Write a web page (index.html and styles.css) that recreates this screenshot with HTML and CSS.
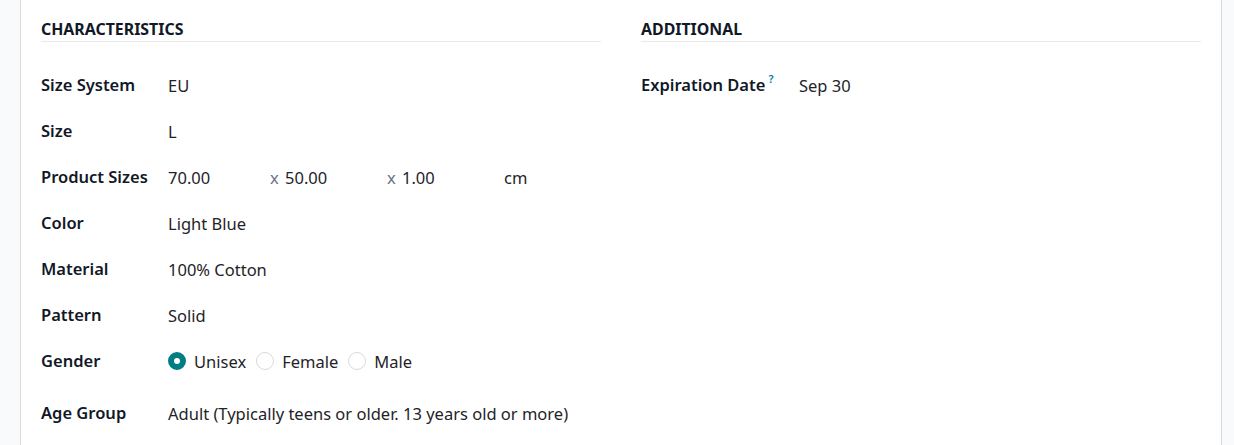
FILE: index.html
```html
<!DOCTYPE html>
<html lang="en">
<head>
  <meta charset="UTF-8" />
  <title>Product</title>
  <link rel="stylesheet" href="styles.css">
</head>
<body>
  <div class="sheet">
    <div class="group">
      <h2 class="group-title">Characteristics</h2>
      <div class="row">
        <div class="label">Size System</div>
        <div class="value">EU</div>
      </div>
      <div class="row">
        <div class="label">Size</div>
        <div class="value">L</div>
      </div>
      <div class="row">
        <div class="label">Product Sizes</div>
        <div class="value sizes">
          <span class="dim">70.00</span>
          <span class="times">x</span>
          <span class="dim">50.00</span>
          <span class="times">x</span>
          <span class="dim">1.00</span>
          <span class="unit">cm</span>
        </div>
      </div>
      <div class="row">
        <div class="label">Color</div>
        <div class="value">Light Blue</div>
      </div>
      <div class="row">
        <div class="label">Material</div>
        <div class="value">100% Cotton</div>
      </div>
      <div class="row">
        <div class="label">Pattern</div>
        <div class="value">Solid</div>
      </div>
      <div class="row">
        <div class="label">Gender</div>
        <div class="value radios">
          <label class="radio"><span class="dot checked"></span>Unisex</label>
          <label class="radio"><span class="dot"></span>Female</label>
          <label class="radio"><span class="dot"></span>Male</label>
        </div>
      </div>
      <div class="row row-last">
        <div class="label">Age Group</div>
        <div class="value">Adult (Typically teens or older. 13 years old or more)</div>
      </div>
    </div>

    <div class="group group-right">
      <h2 class="group-title">Additional</h2>
      <div class="row">
        <div class="label">Expiration Date<sup class="help">?</sup></div>
        <div class="value">Sep 30</div>
      </div>
    </div>
  </div>
</body>
</html>
```

FILE: styles.css
```css
body {
  margin: 0;
  background: #f9fafb;
  font-family: "Noto Sans", "Open Sans", sans-serif;
  font-size: 16.5px;
  color: #1f2328;
  height: 445px;
  overflow: hidden;
}

.sheet {
  margin-left: 20px;
  width: 1160px;
  min-height: 445px;
  background: white;
  border-left: 1px solid #d8dadd;
  border-right: 1px solid #d8dadd;
  padding: 0 20px;
  display: grid;
  grid-template-columns: 1fr 1fr;
  gap: 40px;
}

.group-title {
  margin: 18px 0 20px 0;
  padding-bottom: 1px;
  font-size: 15.9px;
  font-weight: 700;
  line-height: 22px;
  text-transform: uppercase;
  border-bottom: 1px solid #e7e9ed;
  color: #111827;
}

.row {
  display: flex;
  align-items: center;
  height: 46px;
}

.row-last {
  margin-top: 6px;
}

.label {
  width: 127px;
  flex-shrink: 0;
  font-weight: 600;
  color: #111827;
  line-height: 22px;
}

.group-right .label {
  width: 158px;
}

.help {
  color: #0180a5;
  font-size: 11px;
  font-weight: 600;
  line-height: 0;
  vertical-align: 8px;
  margin-left: 3px;
}

.sizes {
  display: flex;
  align-items: center;
}

.dim {
  width: 102px;
}

.times {
  width: 15px;
  color: #6b7280;
}

.radios {
  display: flex;
  align-items: center;
}

.radio {
  display: flex;
  align-items: center;
  margin-right: 10px;
}

.dot {
  width: 18px;
  height: 18px;
  border-radius: 50%;
  border: 1px solid #d8dadd;
  box-sizing: border-box;
  margin-right: 8px;
  background: white;
}

.dot.checked {
  border: 6px solid #017e84;
}
```
